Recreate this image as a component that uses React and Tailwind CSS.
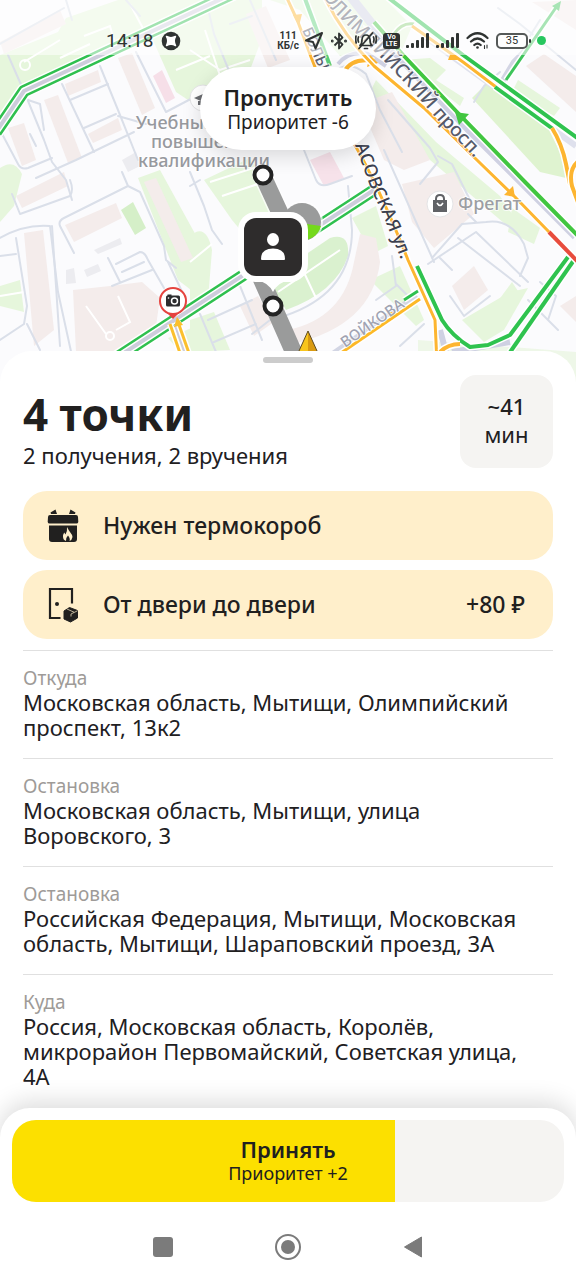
import React from "react";

const stops = [
  { label: "Откуда", address: "Московская область, Мытищи, Олимпийский проспект, 13к2" },
  { label: "Остановка", address: "Московская область, Мытищи, улица Воровского, 3" },
  { label: "Остановка", address: "Российская Федерация, Мытищи, Московская область, Мытищи, Шараповский проезд, 3А" },
  { label: "Куда", address: "Россия, Московская область, Королёв, микрорайон Первомайский, Советская улица, 4А" },
];

/* Traffic-coloured road: coloured edges around a lilac carriageway. */
function DualRoad({ d }) {
  return (
    <g fill="none" strokeLinejoin="round">
      <path d={d} stroke="#ffffff" strokeWidth="15" />
      <path d={d} stroke="#2fc04f" strokeWidth="12" />
      <path d={d} stroke="#ffffff" strokeWidth="7" />
      <path d={d} stroke="#cdcddb" strokeWidth="4" />
    </g>
  );
}

function Lane({ d, color, width = 4 }) {
  return (
    <g fill="none" strokeLinejoin="round">
      <path d={d} stroke="#ffffff" strokeWidth={width + 3} />
      <path d={d} stroke={color} strokeWidth={width} />
    </g>
  );
}

function CityMap() {
  return (
    <svg
      className="absolute inset-x-0 top-0 h-[392px] w-full"
      viewBox="0 0 576 392"
      preserveAspectRatio="xMidYMin slice"
      role="img"
      aria-label="Карта маршрута"
    >
      <defs>
        <path id="olimp" d="M320 -8 L333 11 L381 58 Q410 88 436 118 L490 174" />
        <path id="taras" d="M355 145 L370 186 L385 220 L410 282" />
        <path id="boln" d="M302 30 L330 94" />
        <path id="voik" d="M345 348 L412 302" />
      </defs>
      <rect width="576" height="392" fill="#fbfbfd" />

      <g fill="#e6f6dc">
        <path d="M0 55 L58 32 L66 18 L118 0 L224 0 L200 4 L24 86 L0 116Z" />
        <path d="M152 38 L236 0 L262 0 L262 38 L250 70 L232 84 L200 108 L176 92Z" />
        <path d="M0 168 Q14 158 22 174 L14 206 L0 222Z" />
        <path d="M138 178 L160 170 L204 250 L204 300 L178 280 Z" />
        <path d="M121 210 L133 202 L146 228 L135 235Z" fill="#d5efc8" />
        <path d="M0 286 L20 280 L24 312 L0 306Z" />
        <path d="M168 338 L196 326 L200 340 L180 352Z" />
        <path d="M204 180 L250 158 L280 206 L252 244 L232 220Z" />
        <path d="M190 236 Q206 222 212 250 L208 300 L190 300Z" />
        <path d="M268 280 L330 238 Q350 232 348 256 Q336 292 286 310Z" fill="#daf1cf" />
        <path d="M352 218 L376 206 L388 246 L372 254Z" />
        <path d="M270 0 L350 0 L372 44 L340 56 L300 10Z" />
        <path d="M326 0 L386 0 L412 26 L402 50Z" />
        <path d="M472 98 L486 84 L548 128 L564 160 L566 178 L540 172Z" fill="#dff3d0" />
        <path d="M518 80 L560 108 L554 116 L512 92Z" />
        <path d="M402 60 L430 58 L446 70 L436 80 L464 98 L460 106Z" />
        <path d="M376 80 L436 142 L500 196 L520 226 L534 240 L512 230 L430 160 L370 92Z" />
        <path d="M512 208 L540 228 L534 244 L508 232Z" />
        <path d="M478 328 L512 282 L520 294 L506 326 L486 332Z" />
        <path d="M462 320 L510 292 L528 288 L504 330 L484 342Z" />
        <path d="M190 320 L214 312 L230 350 L190 352Z" />
        <path d="M370 280 L400 266 L424 320 L416 326Z" />
        <path d="M418 340 L576 352 L576 392 L418 392Z" fill="#eef7e8" />
      </g>

      <g fill="#f4eceb">
        <path d="M0 42 L60 10 L66 24 L4 54Z" />
        <path d="M65 84 L98 70 L101 82 L68 96Z" />
        <path d="M44 100 L58 95 L82 158 L68 163Z" />
        <path d="M8 128 L24 123 L36 160 L22 166Z" />
        <path d="M88 134 L118 118 L122 130 L93 143Z" />
        <path d="M118 58 L132 53 L155 108 L142 115Z" />
        <path d="M153 76 L162 70 L175 98 L166 103Z" fill="#f6dfe8" />
        <path d="M16 196 L64 172 L68 186 L22 208Z" />
        <path d="M65 225 L116 203 L122 218 L74 242Z" />
        <path d="M24 233 L43 230 L54 330 L34 346Z" />
        <path d="M144 182 L156 178 L193 258 L181 262Z" />
        <path d="M73 290 L110 286 L142 282 L160 298 L156 326 L116 352 L76 352Z" />
        <path d="M240 306 L258 296 L274 322 L254 336Z" />
        <path d="M310 160 L330 152 L344 178 L324 186Z" fill="#f7e2ea" />
        <path d="M354 262 L360 234 L376 238 L380 262 Q372 326 292 344 L288 330 Q344 318 354 262Z" />
        <path d="M360 104 L392 92 L430 160 L404 170 L384 160Z" />
        <path d="M402 184 L454 172 L474 214 L434 248 L412 222Z" />
        <path d="M452 286 L474 266 L488 290 L464 310Z" />
        <path d="M526 66 L544 54 L576 76 L576 112Z" />
        <path d="M532 2 L576 0 L576 30Z" />
        <path d="M560 306 L576 296 L576 322Z" />
        <path d="M246 14 L266 6 L290 60 L268 68Z" />
      </g>
      <g fill="#ececf0">
        <path d="M94 250 L120 238 L122 244 L98 254Z" />
        <path d="M84 270 L98 264 L101 271 L87 277Z" />
        <path d="M66 270 L74 268 L76 283 L66 284Z" />
        <path d="M122 160 L136 152 L140 166 L128 172Z" />
      </g>

      <g fill="none" stroke="#ffffff" strokeWidth="2">
        <path d="M84 36 L110 26 L116 48 M130 4 L146 34 M24 62 L60 40 M190 50 L220 70 L250 60 M205 30 L224 88 M176 70 L210 56 M60 58 L90 44" />
        <path d="M210 182 L260 166 M222 196 L270 180 M190 262 L212 244 M278 292 L340 250 M300 264 L316 298 M86 306 L106 334 M118 296 L130 322 L116 330" />
        <path d="M0 296 L24 292" />
        <circle cx="25" cy="65" r="5" />
        <circle cx="110" cy="336" r="4" />
      </g>

      <g fill="none" stroke="#dadfe9" strokeWidth="2" strokeLinejoin="round" strokeLinecap="round">
        <path d="M8 55 L26 96 L44 140 L52 162 L66 180 L72 200" />
        <path d="M0 130 L18 164 Q21 170 28 168 L52 158" />
        <path d="M62 84 L94 152 M70 100 L108 84 M84 128 L116 114 M136 52 L156 92 L166 112 L204 92" />
        <path d="M100 66 L118 110 L138 160 M36 178 L76 160 L134 132 M28 100 L40 104 L44 130 M118 116 L146 124 M30 134 L36 146" />
        <path d="M12 194 L20 214 L70 196 Q74 190 70 180" />
        <path d="M0 238 Q24 224 50 226 L58 292 L72 356" />
        <path d="M52 226 L60 346 M16 238 L27 306 L24 324 L0 340 M0 256 L16 254 M27 324 L40 350" />
        <path d="M74 253 L60 226 Q58 221 64 218 L128 186 L140 192 L164 246 L166 260 L176 268 M128 186 L122 172" />
        <path d="M116 264 L140 252 Q145 252 148 260 L164 288 M122 272 L144 262 M112 286 L152 270 M108 258 L120 282" />
        <path d="M168 262 L186 300 M190 172 L204 206 L212 230 L222 244 M190 186 L200 180" />
        <path d="M236 88 L214 34 L206 0 M250 0 L276 60 M230 24 L252 16" />
        <path d="M304 150 L316 180 Q320 188 330 184 L352 176 M340 68 Q352 62 366 74 L380 110 L402 152" />
        <path d="M348 186 L352 230 Q352 300 270 320 L252 334 M240 286 L262 340 M200 314 L216 352 M208 320 L252 300 M214 342 L256 324" />
        <path d="M384 150 L434 262 M432 258 L462 224 L486 222 Q510 218 524 244 L528 258 L520 276" />
        <path d="M428 264 L476 232 L528 282 M458 238 L520 286 M440 258 L452 270 M476 222 L468 214" />
        <path d="M450 296 L464 316 L490 296 M400 346 L424 324 M376 300 L396 286 L392 256 M396 284 L412 300" />
        <path d="M388 100 L430 148 L438 162 L420 184 M438 156 L452 164 L472 204 M474 102 L484 86 L500 72" />
        <path d="M520 24 L576 70 M540 20 L530 36 M498 8 L520 24 M528 300 L558 330 M546 296 L536 310 M540 282 L556 296 L548 320" />
        <path d="M0 44 L64 8 M66 0 L72 20 M126 0 L140 16" />
      </g>

      <DualRoad d="M-4 132 L24 91 L234 -7" />
      <DualRoad d="M104 366 L374 190" />

      <path d="M176 324 L188 358" fill="none" stroke="#cdccdc" strokeWidth="5" />
      <Lane d="M170 324 L181 356" color="#fbc02d" width={3} />
      <Lane d="M178 322 L190 356" color="#fbc02d" width={3} />
      <path d="M177 317 L183 325 L174 327Z" fill="#fbc02d" />

      <path d="M324 362 L418 297" fill="none" stroke="#d3d6e4" strokeWidth="9" />
      <Lane d="M404 300 L418 291" color="#2fc04f" width={3} />
      <Lane d="M322 366 L420 299" color="#fdb827" width={3} />
      <path d="M396 312 L392 320 L388 312Z" fill="#fdb827" />

      <path d="M350 -4 L388 44 L470 130 L576 236" fill="none" stroke="#cfd1e2" strokeWidth="9" />
      <path d="M424 36 L576 146" fill="none" stroke="#dfe1ed" strokeWidth="6" />
      <path d="M502 82 L514 62 L530 46" fill="none" stroke="#d3d5e4" strokeWidth="6" />
      <path d="M338 64 Q350 50 368 54 L386 66" fill="none" stroke="#cfd1e2" strokeWidth="4" />
      <path d="M440 330 L446 352 M452 352 L510 342" fill="none" stroke="#cfd1e2" strokeWidth="6" />

      <Lane d="M286 -4 L298 22 L304 38 Q326 100 352 140 Q378 184 408 260 L435 320 L437 364" color="#fdb530" width={3} />
      <path d="M293 15 L302 14 L299 26Z" fill="#fdb530" />
      <Lane d="M304 -4 L330 66" color="#5cd07a" />
      <Lane d="M417 266 L442 320 Q452 336 470 347 L488 345 L510 335 L568 257" color="#2fc34f" />
      <Lane d="M506 358 L574 260" color="#2fc34f" />
      <Lane d="M440 352 Q448 344 460 344" color="#fdb530" />
      <Lane d="M344 72 Q352 57 374 61" color="#fdb530" />
      <path d="M370 55 L378 63 L367 67Z" fill="#fdb530" />

      <Lane d="M324 -4 Q342 34 374 66 L424 108 L480 163 L515 197 L550 233" color="#fdb530" width={3} />
      <Lane d="M549 232 L580 264" color="#e84c3d" />
      <Lane d="M374 22 L404 56 L457 112 L525 182 L580 238" color="#41c640" />
      <path d="M455 112 L469 114 L459 125Z" fill="#41c640" />
      <path d="M513 186 L515 197 L504 195Z" fill="#fdb530" />
      <Lane d="M386 -4 L463 55 L580 140" color="#2fc34f" />
      <Lane d="M394 34 Q402 22 414 24" color="#8dd07c" width={3} />
      <Lane d="M412 26 L463 62 L496 87" color="#fdb530" width={3} />
      <Lane d="M495 87 L553 129" color="#2fc34f" />
      <Lane d="M552 128 Q562 144 566 164 L570 184" color="#fdb530" />
      <Lane d="M580 160 Q568 168 572 186 L580 208" color="#fdb530" />
      <Lane d="M506 80 L557 6" color="#3dc45a" width={3} />
      <path d="M561 1 L559 11 L552 6Z" fill="#3dc45a" />
      <path d="M451 52 L458 60 L448 60Z" fill="#fdb530" />

      <g fontFamily="'Noto Sans', sans-serif" fontWeight="500" stroke="#ffffff" strokeWidth="2" strokeOpacity="0.8" paintOrder="stroke" strokeLinejoin="round">
        <text fontSize="19" fill="#565a6a">
          <textPath href="#olimp" startOffset="4">ОЛИМПИЙСКИЙ просп.</textPath>
        </text>
        <text fontSize="18" fill="#3b4050">
          <textPath href="#taras">АСОВСКАЯ ул.</textPath>
        </text>
        <text fontSize="15" fill="#5b6070">
          <textPath href="#boln">БОЛЬН</textPath>
        </text>
        <text fontSize="15" fill="#a0a3b2">
          <textPath href="#voik">ВОЙКОВА</textPath>
        </text>
        <text fontSize="18" fill="#97999e" textAnchor="middle">
          <tspan x="204" y="129">Учебный центр</tspan>
          <tspan x="204" y="148">повышения</tspan>
          <tspan x="204" y="167">квалификации</tspan>
        </text>
        <text x="458" y="210" fontSize="18" fill="#9c9ea3">Фрегат</text>
      </g>

      <circle cx="203" cy="98" r="13" fill="#ffffff" stroke="#e4e4e6" />
      <path d="M194 98 L203 94 L212 98 L203 102Z M198 101 V105 H207 V101" fill="#6a6c70" />

      <g>
        <circle cx="440" cy="204" r="13" fill="#ffffff" stroke="#e4e4e6" />
        <path d="M433 200 H447 V212 H433Z" fill="#606266" />
        <path d="M436 202 V199 Q436 195 440 195 Q444 195 444 199 V202" fill="none" stroke="#606266" strokeWidth="2" />
        <path d="M437 203 Q440 208 443 203" fill="none" stroke="#ffffff" strokeWidth="1.5" />
      </g>

      <g>
        <path d="M167 313 L173 319 L179 313Z" fill="#e5433f" />
        <circle cx="173" cy="301" r="13" fill="#ffffff" stroke="#e5433f" strokeWidth="2" />
        <rect x="166" y="295.500" width="14" height="11" rx="1.500" fill="#2d2d2f" />
        <rect x="167.500" y="294.500" width="4" height="2" fill="#2d2d2f" />
        <circle cx="174.500" cy="301" r="3" fill="none" stroke="#ffffff" strokeWidth="1.500" />
        <circle cx="168.500" cy="298" r="0.800" fill="#ffffff" />
      </g>

      <g fill="none" stroke="#ffffff" strokeLinecap="round" opacity="0.7">
        <path d="M262 174 L284 222" strokeWidth="20" />
        <circle cx="302" cy="222" r="19" strokeWidth="4" />
      </g>
      <path d="M262 174 L286 226 M260 276 L298 362" fill="none" stroke="#9a9b9b" strokeWidth="17" strokeLinecap="round" />
      <circle cx="302" cy="222" r="19" fill="#9a9b9b" />
      <path d="M300 223 L321 226 A19 19 0 0 1 305 240Z" fill="#74d91c" />

      <g fill="#ffffff" stroke="#232323" strokeWidth="4">
        <circle cx="263" cy="175" r="8.500" />
        <circle cx="273" cy="306" r="8.500" />
      </g>

      <g>
        <rect x="238" y="212" width="70" height="70" rx="18" fill="#ffffff" />
        <path d="M256 280 Q268 282 273 292 Q278 282 290 280Z" fill="#ffffff" />
        <rect x="244" y="218" width="58" height="58" rx="12" fill="#2e2c2c" />
        <ellipse cx="273" cy="239.500" rx="6" ry="6.500" fill="#ffffff" />
        <path d="M261 259 Q261 248.500 273 248.500 Q285 248.500 285 259 Q285 260 284 260 H262 Q261 260 261 259Z" fill="#ffffff" />
      </g>

      <path d="M308 331 L294 362 L308 354Z" fill="#f8c51c" />
      <path d="M308 331 L322 362 L308 354Z" fill="#d99a12" />
      <path d="M294 362 L308 331 L322 362" fill="none" stroke="#5c4a22" strokeWidth="1" />
    </svg>
  );
}

function SignalIcon() {
  return (
    <svg className="h-4 w-6" viewBox="0 0 24 16" fill="#2f3332" aria-hidden="true">
      <rect x="0" y="12" width="3" height="3" rx="1" />
      <rect x="5" y="10" width="3" height="5" rx="1" />
      <rect x="10" y="7" width="3" height="8" rx="1" />
      <rect x="15" y="4" width="3" height="11" rx="1" />
      <rect x="20" y="0" width="3" height="15" rx="1" />
    </svg>
  );
}

function StatusBar() {
  return (
    <div className="relative flex h-[55px] items-center justify-between bg-white/55 pt-[26px] pr-[30px] pl-[106px] text-[#2f3332]">
      <div className="flex items-center gap-2">
        <span className="font-[Roboto,sans-serif] text-[19px] leading-6">14:18</span>
        <svg className="size-5" viewBox="0 0 20 20" aria-hidden="true">
          <circle cx="10" cy="10" r="9.300" fill="#2f3332" />
          <path d="M5.500 5.500 Q10 8 14.500 5.500 Q12 10 14.500 14.500 Q10 12 5.500 14.500 Q8 10 5.500 5.500Z" fill="#ffffff" stroke="#ffffff" strokeWidth="1.500" strokeLinejoin="round" />
        </svg>
      </div>
      <div className="flex items-center gap-[6px]">
        <span className="text-center font-[Roboto,sans-serif] text-[10px] leading-[10px] font-bold">
          111
          <br />
          КБ/с
        </span>
        <svg className="h-[18px] w-5" viewBox="0 0 20 18" aria-hidden="true">
          <path d="M17 1 L10.500 16.500 L8 10 L1 8.500Z" fill="none" stroke="#2f3332" strokeWidth="2" strokeLinejoin="round" />
        </svg>
        <svg className="h-[18px] w-[18px]" viewBox="0 0 18 18" fill="none" stroke="#2f3332" strokeWidth="1.800" aria-hidden="true">
          <path d="M3.500 4.500 L11.500 12.500 L8 16.500 V1.500 L11.500 5.500 L3.500 13.500" strokeLinejoin="round" />
          <circle cx="1.200" cy="9" r="0.600" />
          <circle cx="14.500" cy="9" r="0.600" />
        </svg>
        <svg className="h-[18px] w-[22px]" viewBox="0 0 22 18" fill="none" stroke="#2f3332" strokeWidth="1.700" strokeLinecap="round" strokeLinejoin="round" aria-hidden="true">
          <path d="M5 13.500 Q7 12 7 7.500 Q7.500 3 11 3 Q14.500 3 15 7.500 Q15 12 17 13.500Z M9.500 16.500 H12.500 M3.500 5 Q2.500 7.500 3.500 10 M1 4 Q0.300 7.500 1.200 11 M18.500 5 Q19.500 7.500 18.500 10 M21 4 Q21.700 7.500 20.800 11 M17.500 1 L4 16.500" />
        </svg>
        <span className="flex h-4 w-[17px] flex-col items-center justify-center rounded-[3px] bg-[#2f3332] font-[Roboto,sans-serif] text-[7px] leading-[7px] font-bold text-white">
          <span>Vo</span>
          <span>LTE</span>
        </span>
        <SignalIcon />
        <SignalIcon />
        <svg className="h-[18px] w-6" viewBox="0 0 24 18" fill="none" stroke="#2f3332" strokeWidth="2.200" strokeLinecap="round" aria-hidden="true">
          <path d="M1.500 6 Q11.500 -3.500 21.500 6 M5 9.500 Q11.500 3.500 18 9.500 M8.300 13 Q11.500 10.200 14.700 13" />
          <circle cx="11.500" cy="15.500" r="1.300" fill="#2f3332" stroke="none" />
          <path d="M18.500 13.500 V16.500 M21 13 V16" strokeWidth="1.100" />
        </svg>
        <span className="flex items-center gap-px">
          <span className="flex h-4 w-8 items-center justify-center rounded-[5px] border-2 border-[#555958] bg-white/40 font-[Roboto,sans-serif] text-[11px] leading-3">
            35
          </span>
          <span className="h-1 w-[2px] rounded-full bg-[#2f3332]" />
        </span>
        <span className="size-[9px] rounded-full bg-[#27c75f]" />
      </div>
    </div>
  );
}

function ThermoBoxIcon() {
  return (
    <svg className="h-9 w-8" viewBox="0 0 32 36" fill="#21201f" aria-hidden="true">
      <path d="M3.500 4.500 L8.500 1.500 L10 6 H4Z M28.500 4.500 L23.500 1.500 L22 6 H28Z" />
      <path d="M3 7 H29 Q31 7 31 9 L31.300 14 Q31 15.500 29.500 15.500 H2.500 Q1 15.500 0.700 14 L1 9 Q1 7 3 7Z" />
      <path d="M2 17.500 H30 V31 Q30 34 27 34 H5 Q2 34 2 31Z" />
      <path d="M20 19 Q21.500 22 23 24 Q25.500 27 25.500 29 Q25 32 22.500 33 Q23.500 30.500 21 27.500 Q18.500 30 19 33 Q16 32 16 28.500 Q16 26.500 17.200 24.500 L18.500 26.500 Q20.500 23.500 20 19Z" fill="#ffefcb" />
    </svg>
  );
}

function DoorIcon() {
  return (
    <svg className="h-9 w-8" viewBox="0 0 32 36" aria-hidden="true">
      <path d="M25 16.500 V2 H3 V31 H13.500" fill="none" stroke="#21201f" strokeWidth="2.200" />
      <circle cx="10" cy="17" r="2" fill="#21201f" />
      <path d="M17 24 L22.500 20.500 L30.500 23.500 V31 L23.500 35 L17 32Z" fill="#21201f" stroke="#21201f" strokeLinejoin="round" />
      <path d="M20 22 L27 25.200 M24 27 L30.500 23.800 M24 27 V29.500" fill="none" stroke="#ffefcb" strokeWidth="0.700" />
    </svg>
  );
}

function Requirement({ icon, title, price }) {
  return (
    <li className="flex h-[69px] items-center gap-6 rounded-[24px] bg-[#ffefcb] pr-7 pl-6">
      {icon}
      <span className="grow pb-[2px] text-[23px] leading-7 font-medium">{title}</span>
      {price && <span className="pb-[2px] text-[23px] leading-7 font-medium">{price}</span>}
    </li>
  );
}

export default function App() {
  return (
    <div className="flex min-h-screen flex-col bg-white font-['Noto_Sans',sans-serif] text-[#21201f]">
      <header className="relative flex h-[351px] flex-col">
        <CityMap />
        <StatusBar />
        <button
          type="button"
          className="relative mt-3 flex h-[83px] flex-col items-center justify-center self-center rounded-full bg-white px-6 shadow-[0_6px_20px_rgba(0,0,0,0.14)]"
        >
          <span className="text-[22px] leading-[26px] font-semibold">Пропустить</span>
          <span className="text-[19px] leading-6">Приоритет -6</span>
        </button>
      </header>

      <main className="relative flex grow flex-col rounded-t-[32px] bg-white px-[23px]">
        <div className="mt-[6px] h-[6px] w-[50px] self-center rounded-full bg-[#cccccc]" />
        <div className="mt-3 flex items-start justify-between">
          <div className="pt-3">
            <h1 className="text-[44px] leading-[54px] font-bold">4 точки</h1>
            <p className="text-[22px] leading-7">2 получения, 2 вручения</p>
          </div>
          <div className="flex size-[93px] flex-col items-center justify-center rounded-[16px] bg-[#f5f4f2] pb-1 text-[22px] leading-7 font-medium">
            <span>~41</span>
            <span className="font-normal">мин</span>
          </div>
        </div>

        <ul className="mt-[22px] flex flex-col gap-[10px]">
          <Requirement icon={<ThermoBoxIcon />} title="Нужен термокороб" />
          <Requirement icon={<DoorIcon />} title="От двери до двери" price="+80 ₽" />
        </ul>

        <dl className="mt-[11px]">
          {stops.map((stop, i) => (
            <div key={i} className="border-t border-[#e0e0e0] pt-[15px] pb-[18px]">
              <dt className="text-[19px] leading-6 text-[#9e9b98]">{stop.label}</dt>
              <dd className="pr-4 text-[22px] leading-[25px]">{stop.address}</dd>
            </div>
          ))}
        </dl>
      </main>

      <footer className="sticky bottom-0 rounded-t-[30px] bg-white px-3 pt-3 shadow-[0_-6px_24px_rgba(0,0,0,0.14)]">
        <button type="button" className="relative block h-[82px] w-full overflow-hidden rounded-[24px] bg-[#f5f4f2]">
          <span className="absolute inset-y-0 left-0 w-[69.4%] bg-[#fce000]" />
          <span className="relative flex flex-col items-center pb-[2px]">
            <span className="text-[22px] leading-[26px] font-semibold">Принять</span>
            <span className="text-lg leading-[22px]">Приоритет +2</span>
          </span>
        </button>
        <nav className="flex h-[78px] items-center justify-center gap-[99px] pt-3">
          <button type="button" aria-label="Недавние" className="flex size-[26px] items-center justify-center">
            <span className="size-5 rounded-[3px] bg-[#7b7b7b]" />
          </button>
          <button type="button" aria-label="Домой" className="flex size-[26px] items-center justify-center rounded-full border-2 border-[#7b7b7b]">
            <span className="size-[14px] rounded-full bg-[#7b7b7b]" />
          </button>
          <button type="button" aria-label="Назад" className="flex size-[26px] items-center justify-center">
            <svg className="h-[22px] w-5" viewBox="0 0 20 22" aria-hidden="true">
              <path d="M18.500 1 V21 L1.500 11Z" fill="#7b7b7b" stroke="#7b7b7b" strokeLinejoin="round" />
            </svg>
          </button>
        </nav>
      </footer>
    </div>
  );
}
